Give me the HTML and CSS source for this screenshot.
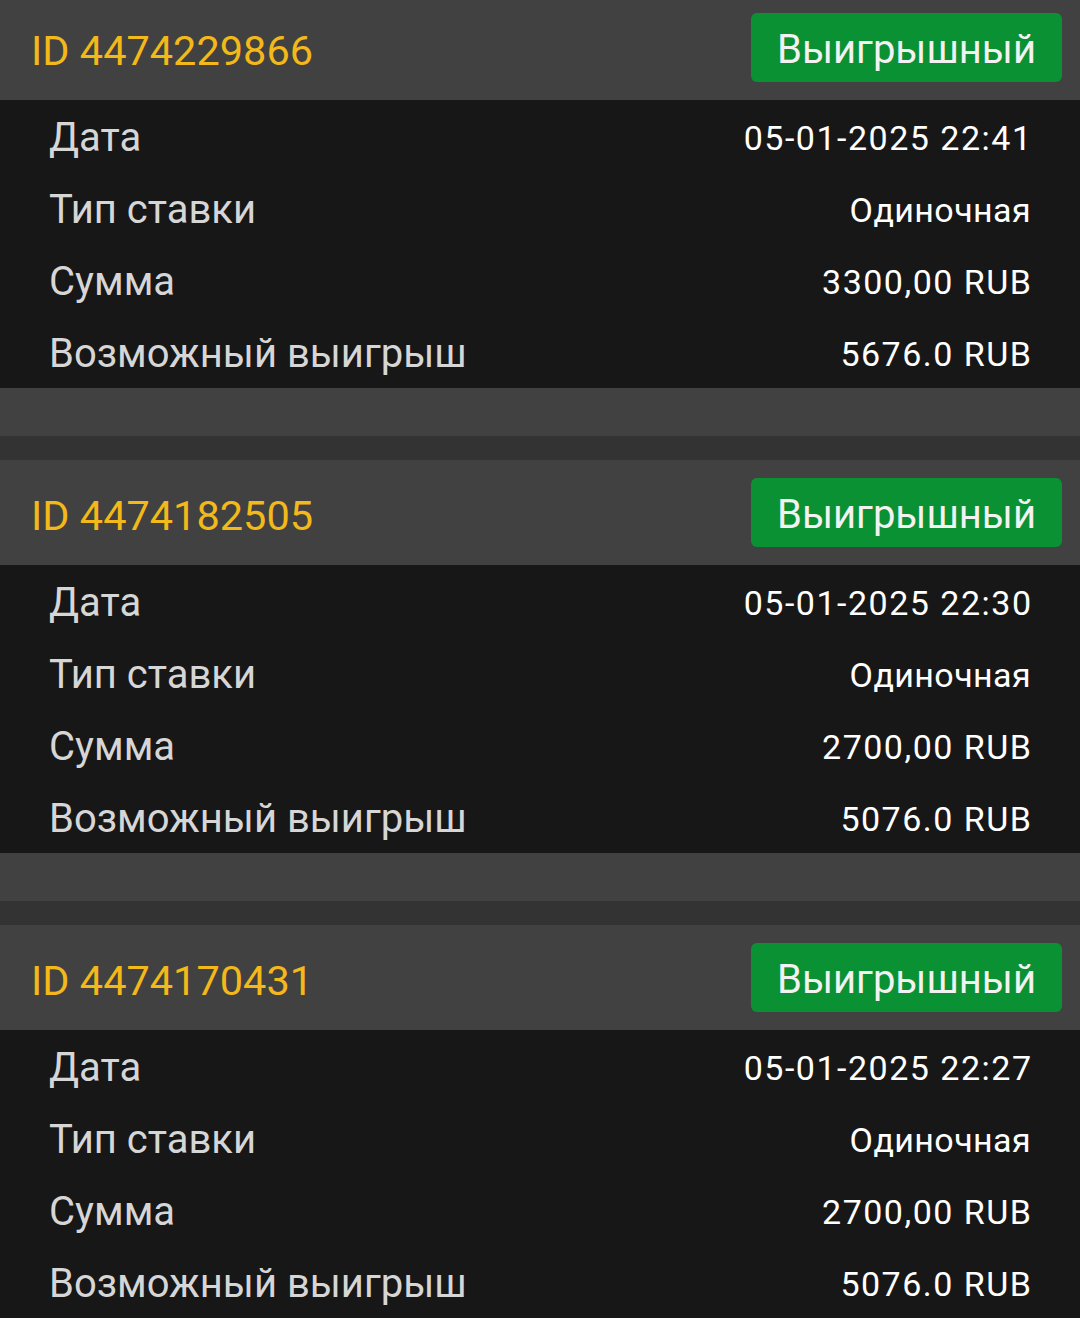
FILE: index.html
```html
<!DOCTYPE html>
<html lang="ru">
<head>
<meta charset="utf-8">
<link rel="stylesheet" href="styles.css">
</head>
<body>
<div class="list">
  <section class="card first">
    <header class="card-head">
      <span class="bet-id">ID 4474229866</span>
      <span class="badge">Выигрышный</span>
    </header>
    <div class="card-body">
      <div class="row"><span class="label">Дата</span><span class="value num">05-01-2025 22:41</span></div>
      <div class="row"><span class="label">Тип ставки</span><span class="value">Одиночная</span></div>
      <div class="row"><span class="label">Сумма</span><span class="value num">3300,00 RUB</span></div>
      <div class="row"><span class="label">Возможный выигрыш</span><span class="value num">5676.0 RUB</span></div>
    </div>
    <div class="card-foot"></div>
  </section>
  <div class="sep"></div>
  <section class="card">
    <header class="card-head">
      <span class="bet-id">ID 4474182505</span>
      <span class="badge">Выигрышный</span>
    </header>
    <div class="card-body">
      <div class="row"><span class="label">Дата</span><span class="value num">05-01-2025 22:30</span></div>
      <div class="row"><span class="label">Тип ставки</span><span class="value">Одиночная</span></div>
      <div class="row"><span class="label">Сумма</span><span class="value num">2700,00 RUB</span></div>
      <div class="row"><span class="label">Возможный выигрыш</span><span class="value num">5076.0 RUB</span></div>
    </div>
    <div class="card-foot"></div>
  </section>
  <div class="sep"></div>
  <section class="card">
    <header class="card-head">
      <span class="bet-id">ID 4474170431</span>
      <span class="badge">Выигрышный</span>
    </header>
    <div class="card-body">
      <div class="row"><span class="label">Дата</span><span class="value num">05-01-2025 22:27</span></div>
      <div class="row"><span class="label">Тип ставки</span><span class="value">Одиночная</span></div>
      <div class="row"><span class="label">Сумма</span><span class="value num">2700,00 RUB</span></div>
      <div class="row"><span class="label">Возможный выигрыш</span><span class="value num">5076.0 RUB</span></div>
    </div>
  </section>
</div>
</body>
</html>
```

FILE: styles.css
```css
html, body {
  margin: 0;
  padding: 0;
  background: #333333;
}
body {
  width: 1080px;
  height: 1318px;
  overflow: hidden;
  font-family: Roboto, "Noto Sans", sans-serif;
}
.list {
  display: flex;
  flex-direction: column;
}
.card.first {
  margin-top: -5px;
}
.card-head {
  height: 105px;
  background: #414141;
  display: flex;
  align-items: center;
  justify-content: space-between;
  padding: 0 18px 0 31px;
  box-sizing: border-box;
}
.bet-id {
  color: #f3b81a;
  font-size: 41.5px;
  padding-top: 5px;
}
.badge {
  background: #0a9133;
  color: #f2f2f2;
  font-size: 40px;
  height: 69px;
  width: 311px;
  border-radius: 6px;
  display: flex;
  align-items: center;
  justify-content: center;
  box-sizing: border-box;
  padding-top: 3px;
}
.card-body {
  background: #171717;
  display: flex;
  flex-direction: column;
}
.row {
  height: 72px;
  box-sizing: border-box;
  padding: 3px 49px 0 49px;
  display: flex;
  align-items: center;
  justify-content: space-between;
}
.label {
  color: #d6d6d6;
  font-size: 40px;
}
.value {
  color: #ffffff;
  font-size: 34px;
  letter-spacing: 0.4px;
}
.value.num {
  letter-spacing: 1.5px;
  margin-right: -1.5px;
}
.card-foot {
  height: 48px;
  background: #414141;
}
.sep {
  height: 24px;
  background: #333333;
}
```
